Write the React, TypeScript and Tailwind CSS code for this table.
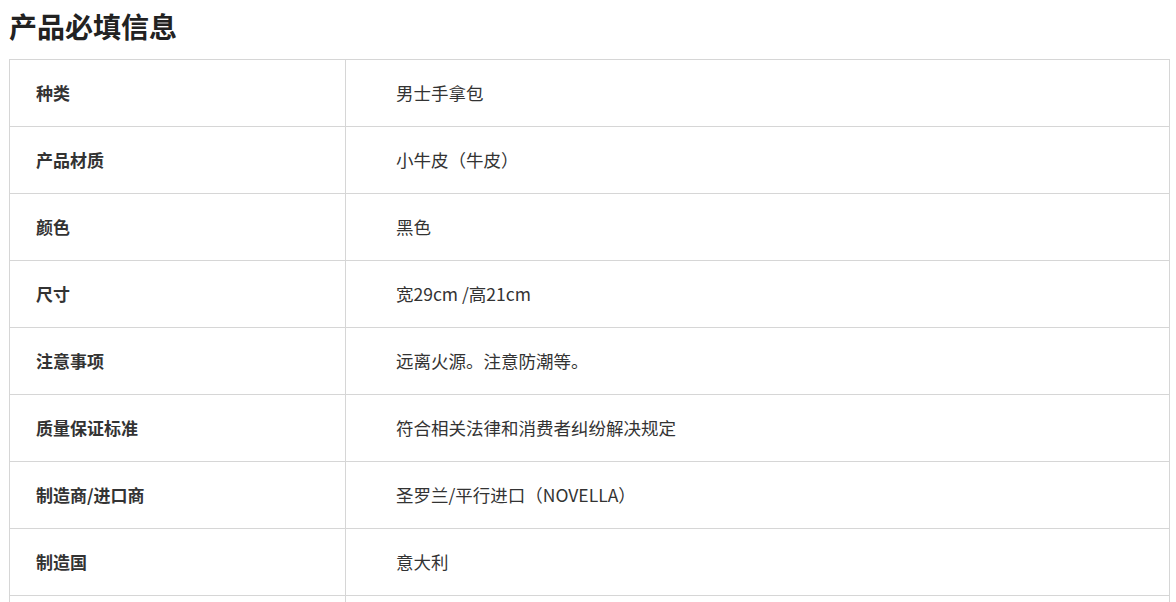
import React from 'react';

const rows: { label: string; value: string }[] = [
  { label: '种类', value: '男士手拿包' },
  { label: '产品材质', value: '小牛皮（牛皮）' },
  { label: '颜色', value: '黑色' },
  { label: '尺寸', value: '宽29cm /高21cm' },
  { label: '注意事项', value: '远离火源。注意防潮等。' },
  { label: '质量保证标准', value: '符合相关法律和消费者纠纷解决规定' },
  { label: '制造商/进口商', value: '圣罗兰/平行进口（NOVELLA）' },
  { label: '制造国', value: '意大利' },
  { label: '', value: '' },
];

const App = () => {
  return (
    <div
      className="w-[1176px] h-[602px] overflow-hidden bg-white text-[#333]"
      style={{ fontFamily: '"Noto Sans CJK SC", "Noto Sans", sans-serif' }}
    >
      <div className="pl-[9px] pr-[6px]">
        <h2 className="pt-[8px] mb-[15px] text-[28px] leading-[36px] font-bold text-[#222]">产品必填信息</h2>
        <table className="w-[1161px] border-collapse table-fixed">
          <colgroup>
            <col className="w-[336px]" />
            <col />
          </colgroup>
          <tbody>
            {rows.map((r, i) => (
              <tr key={i} className="h-[67px]">
                <td className="border border-[#d6d6d6] pl-[26px] text-[17px] font-bold text-[#333]">{r.label}</td>
                <td className="border border-[#d6d6d6] pl-[50px] text-[17.5px] text-[#333]">{r.value}</td>
              </tr>
            ))}
          </tbody>
        </table>
      </div>
    </div>
  );
};

export default App;
